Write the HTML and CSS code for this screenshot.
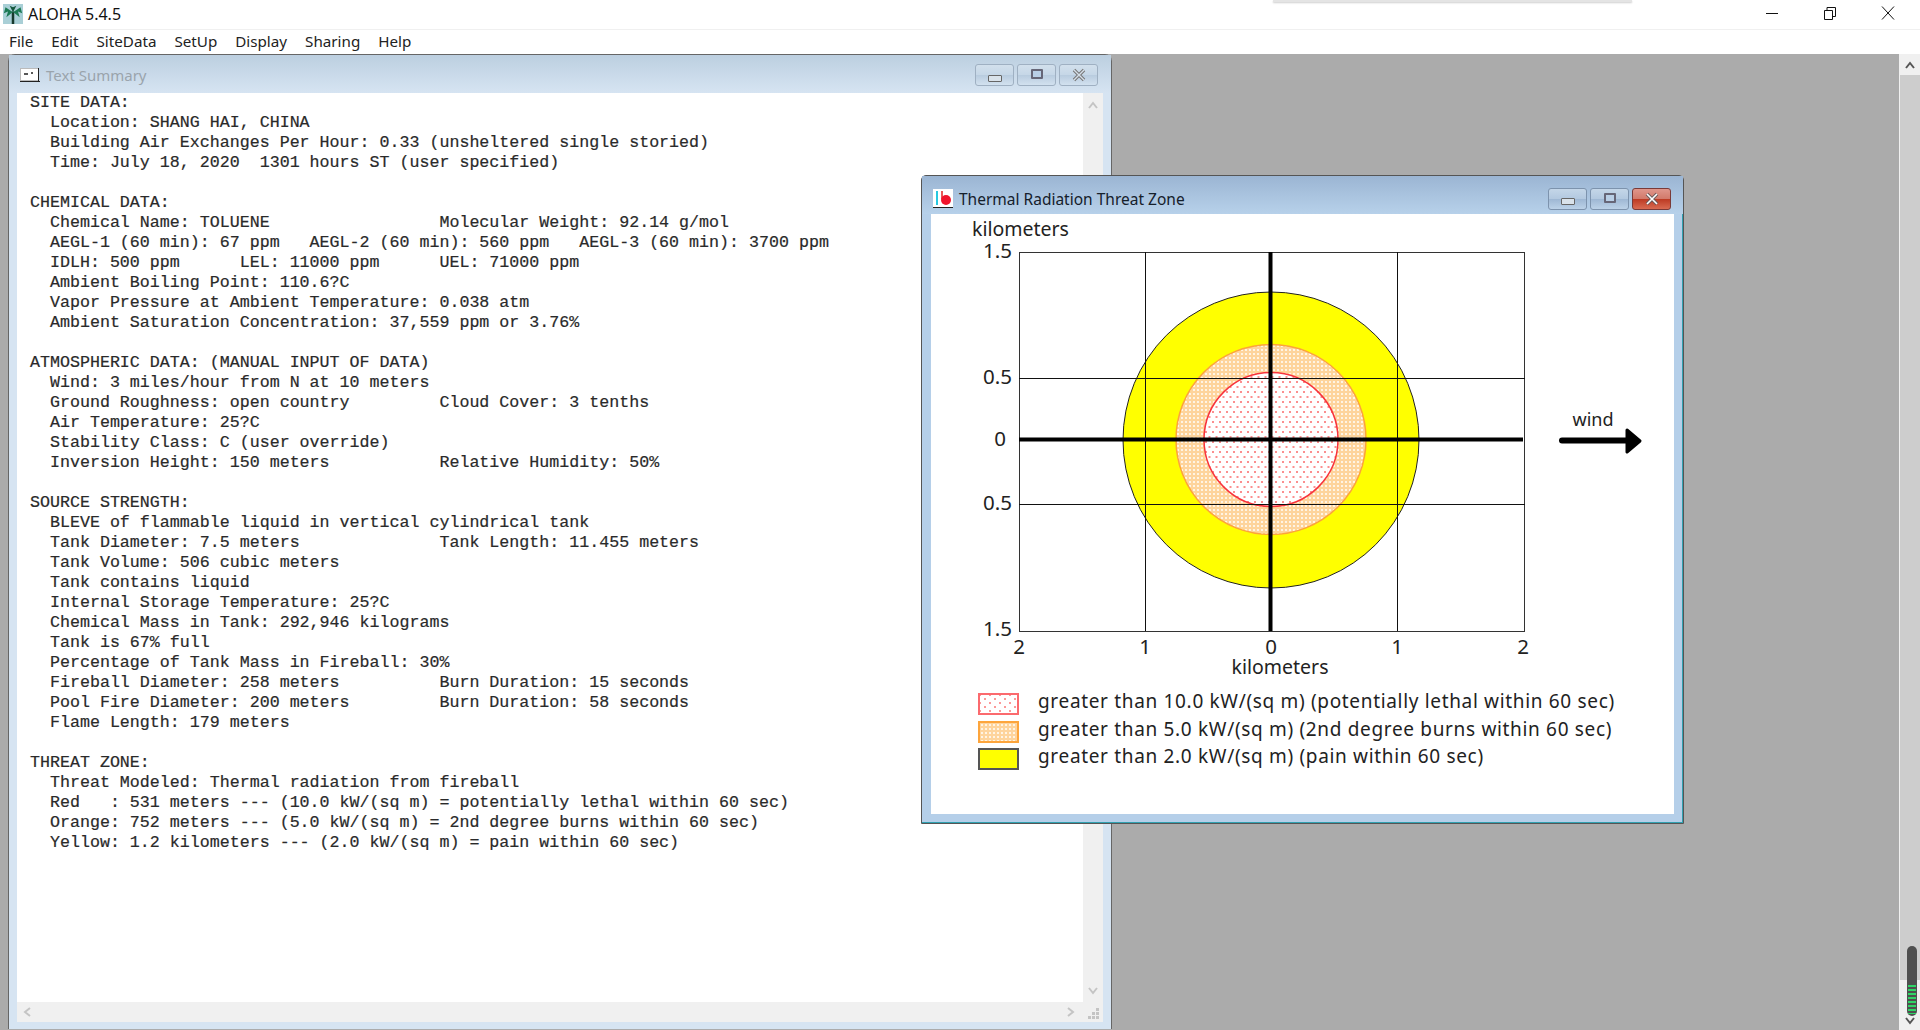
FILE: index.html
```html
<!DOCTYPE html>
<html lang="en">
<head>
    <meta charset="UTF-8">
    <title>ALOHA 5.4.5</title>
    <link rel="stylesheet" href="styles.css">
</head>
<body>
    <div class="app-title">
        <svg class="app-icon" width="20" height="20" viewBox="0 0 24 24">
            <rect width="24" height="24" fill="#a9cfd6"/>
            <rect x="10.5" y="9" width="3" height="15" fill="#17392c"/>
            <path d="M12 10 L3 4 L1 11 L6 9 L4 16 L10 11 Z" fill="#1c7a54"/>
            <path d="M12 10 L21 4 L23 11 L18 9 L20 16 L14 11 Z" fill="#1c7a54"/>
            <path d="M12 10 L8 2 L12 4 L16 2 Z" fill="#14573c"/>
        </svg>
        <span class="app-name">ALOHA 5.4.5</span>
        <div class="app-shadow"></div>
        <div class="win-controls">
            <svg width="14" height="14" viewBox="0 0 14 14"><path d="M1 7.5H13" stroke="#111" fill="none"/></svg>
            <svg width="14" height="14" viewBox="0 0 14 14"><path d="M1.5 4.5H9.5V13.5H1.5Z M4 4.5V1.5H12.5V10.5H9.5" stroke="#111" fill="none"/></svg>
            <svg width="14" height="14" viewBox="0 0 14 14"><path d="M1 0.5L13 13.5M13 0.5L1 13.5" stroke="#111" fill="none"/></svg>
        </div>
    </div>

    <div class="menubar">
        <span>File</span>
        <span>Edit</span>
        <span>SiteData</span>
        <span>SetUp</span>
        <span>Display</span>
        <span>Sharing</span>
        <span>Help</span>
    </div>

    <div class="mdi">
        <!-- Text summary -->
        <div class="doc-window">
            <div class="doc-title">
                <svg class="doc-icon" width="20" height="14" viewBox="0 0 20 14">
                    <rect x="0.5" y="0.5" width="18" height="12" fill="#fff" stroke="#bbb"/>
                    <path d="M0 13.5H20M18.5 0V14" stroke="#222" fill="none"/>
                    <path d="M5 5V7M7 5V7M11 5H13" stroke="#222" stroke-width="1.5" fill="none"/>
                </svg>
                <span class="doc-name">Text Summary</span>
                <div class="btn-group btn-faded">
                    <div class="cap-btn"><i class="glyph-min"></i></div>
                    <div class="cap-btn"><i class="glyph-max"></i></div>
                    <div class="cap-btn cap-x-faded">
                        <svg width="16" height="14" viewBox="0 0 16 14"><path d="M3 2L13 12M13 2L3 12" stroke="#777" stroke-width="3.5" fill="none"/><path d="M3 2L13 12M13 2L3 12" stroke="#d5dfe9" stroke-width="1.4" fill="none"/></svg>
                    </div>
                </div>
            </div>
            <div class="doc-body">
                <pre class="summary">SITE DATA:
  Location: SHANG HAI, CHINA
  Building Air Exchanges Per Hour: 0.33 (unsheltered single storied)
  Time: July 18, 2020  1301 hours ST (user specified)

CHEMICAL DATA:
  Chemical Name: TOLUENE                 Molecular Weight: 92.14 g/mol
  AEGL-1 (60 min): 67 ppm   AEGL-2 (60 min): 560 ppm   AEGL-3 (60 min): 3700 ppm
  IDLH: 500 ppm      LEL: 11000 ppm      UEL: 71000 ppm
  Ambient Boiling Point: 110.6?C
  Vapor Pressure at Ambient Temperature: 0.038 atm
  Ambient Saturation Concentration: 37,559 ppm or 3.76%

ATMOSPHERIC DATA: (MANUAL INPUT OF DATA)
  Wind: 3 miles/hour from N at 10 meters
  Ground Roughness: open country         Cloud Cover: 3 tenths
  Air Temperature: 25?C
  Stability Class: C (user override)
  Inversion Height: 150 meters           Relative Humidity: 50%

SOURCE STRENGTH:
  BLEVE of flammable liquid in vertical cylindrical tank
  Tank Diameter: 7.5 meters              Tank Length: 11.455 meters
  Tank Volume: 506 cubic meters
  Tank contains liquid
  Internal Storage Temperature: 25?C
  Chemical Mass in Tank: 292,946 kilograms
  Tank is 67% full
  Percentage of Tank Mass in Fireball: 30%
  Fireball Diameter: 258 meters          Burn Duration: 15 seconds
  Pool Fire Diameter: 200 meters         Burn Duration: 58 seconds
  Flame Length: 179 meters

THREAT ZONE:
  Threat Modeled: Thermal radiation from fireball
  Red   : 531 meters --- (10.0 kW/(sq m) = potentially lethal within 60 sec)
  Orange: 752 meters --- (5.0 kW/(sq m) = 2nd degree burns within 60 sec)
  Yellow: 1.2 kilometers --- (2.0 kW/(sq m) = pain within 60 sec)</pre>
                <div class="vscroll">
                    <svg width="12" height="8" viewBox="0 0 12 8"><path d="M2 7L6 2L10 7" stroke="#c4c4c4" stroke-width="2" fill="none"/></svg>
                    <svg width="12" height="8" viewBox="0 0 12 8"><path d="M2 1L6 6L10 1" stroke="#c4c4c4" stroke-width="2" fill="none"/></svg>
                </div>
            </div>
            <div class="hscroll">
                <svg width="8" height="12" viewBox="0 0 8 12"><path d="M7 2L2 6L7 10" stroke="#c4c4c4" stroke-width="2" fill="none"/></svg>
                <svg width="8" height="12" viewBox="0 0 8 12"><path d="M1 2L6 6L1 10" stroke="#c4c4c4" stroke-width="2" fill="none"/></svg>
                <svg class="grip" width="14" height="14" viewBox="0 0 14 14" fill="#c4c4c4">
                    <rect x="9" y="1" width="3" height="3"/><rect x="5" y="5" width="3" height="3"/><rect x="9" y="5" width="3" height="3"/>
                    <rect x="1" y="9" width="3" height="3"/><rect x="5" y="9" width="3" height="3"/><rect x="9" y="9" width="3" height="3"/>
                </svg>
            </div>
        </div>

        <!-- Threat zone plot -->
        <div class="threat-window">
            <div class="threat-title">
                <svg class="threat-icon" width="20" height="20" viewBox="0 0 20 20">
                    <rect width="20" height="18" fill="#fff"/>
                    <path d="M4 2V16" stroke="#27c8e0" stroke-width="2"/>
                    <path d="M9 2V10" stroke="#e02020" stroke-width="1.5"/>
                    <circle cx="13" cy="11" r="5" fill="#f0142c"/>
                    <path d="M0 18.5H20" stroke="#222"/>
                </svg>
                <span class="threat-name">Thermal Radiation Threat Zone</span>
                <div class="btn-group">
                    <div class="cap-btn"><i class="glyph-min"></i></div>
                    <div class="cap-btn"><i class="glyph-max"></i></div>
                    <div class="cap-btn cap-close">
                        <svg width="16" height="14" viewBox="0 0 16 14"><path d="M3 2L13 12M13 2L3 12" stroke="#6b5a5a" stroke-width="3.5" fill="none"/><path d="M3 2L13 12M13 2L3 12" stroke="#fff" stroke-width="1.6" fill="none"/></svg>
                    </div>
                </div>
            </div>
            <div class="threat-body">
                <svg class="plot" width="742" height="479" viewBox="931 214 742 479">
                    <defs>
                        <pattern id="dotsRed" width="7" height="10" patternUnits="userSpaceOnUse">
                            <rect width="7" height="10" fill="#fff"/>
                            <rect x="1" y="1" width="2" height="2" fill="#fb8f8f"/>
                            <rect x="4.5" y="6" width="2" height="2" fill="#fb8f8f"/>
                        </pattern>
                        <pattern id="dotsOrange" width="4" height="4" patternUnits="userSpaceOnUse">
                            <rect width="4" height="4" fill="#fed49c"/>
                            <rect x="1" y="1" width="2" height="2" fill="#fff4e4"/>
                        </pattern>
                    </defs>
                    <text class="plot-label" x="972" y="236">kilometers</text>
                    <rect x="1019.5" y="252.5" width="505" height="379" fill="#fff" stroke="#333"/>
                    <circle cx="1271" cy="440" r="148" fill="#ffff00" stroke="#222"/>
                    <circle cx="1271" cy="439.5" r="95" fill="url(#dotsOrange)" stroke="#fda33a" stroke-width="1.5"/>
                    <circle cx="1271" cy="439.5" r="67" fill="url(#dotsRed)" stroke="#f8333c" stroke-width="1.5"/>
                    <path d="M1145.5 252V631M1397.5 252V631M1019 378.5H1525M1019 504.5H1525" stroke="#111" fill="none"/>
                    <path d="M1270.5 252V631M1019 439.5H1523" stroke="#000" stroke-width="4" fill="none"/>
                    <text class="tick-label tick-y" x="1012" y="258">1.5</text>
                    <text class="tick-label tick-y" x="1012" y="384">0.5</text>
                    <text class="tick-label tick-y" x="1006" y="446">0</text>
                    <text class="tick-label tick-y" x="1012" y="510">0.5</text>
                    <text class="tick-label tick-y" x="1012" y="636">1.5</text>
                    <text class="tick-label tick-x" x="1019" y="654">2</text>
                    <text class="tick-label tick-x" x="1145" y="654">1</text>
                    <text class="tick-label tick-x" x="1271" y="654">0</text>
                    <text class="tick-label tick-x" x="1397" y="654">1</text>
                    <text class="tick-label tick-x" x="1523" y="654">2</text>
                    <text class="plot-label tick-x" x="1280" y="674">kilometers</text>
                    <text class="wind-label tick-x" x="1593" y="426">wind</text>
                    <path d="M1562 440.5H1630" stroke="#000" stroke-width="6" stroke-linecap="round"/>
                    <path d="M1627 430L1640 441L1627 452Z" fill="#000" stroke="#000" stroke-width="3" stroke-linejoin="round"/>
                </svg>
                <div class="legend">
                    <div class="legend-row">
                        <span class="swatch swatch-red"></span>
                        <span class="legend-text">greater than 10.0 kW/(sq m) (potentially lethal within 60 sec)</span>
                    </div>
                    <div class="legend-row">
                        <span class="swatch swatch-orange"></span>
                        <span class="legend-text">greater than 5.0 kW/(sq m) (2nd degree burns within 60 sec)</span>
                    </div>
                    <div class="legend-row">
                        <span class="swatch swatch-yellow"></span>
                        <span class="legend-text">greater than 2.0 kW/(sq m) (pain within 60 sec)</span>
                    </div>
                </div>
            </div>
        </div>

        <!-- Outer scrollbar -->
        <div class="mdi-scroll">
            <div class="mdi-scroll-up">
                <svg width="12" height="8" viewBox="0 0 12 8"><path d="M2 7L6 2L10 7" stroke="#555" stroke-width="2" fill="none"/></svg>
            </div>
            <div class="mdi-scroll-track"></div>
            <div class="mdi-scroll-down">
                <svg width="12" height="8" viewBox="0 0 12 8"><path d="M2 1L6 6L10 1" stroke="#555" stroke-width="2" fill="none"/></svg>
            </div>
        </div>
        <div class="meter"><div class="meter-bars"></div></div>
    </div>
</body>
</html>
```

FILE: styles.css
```css
html, body {
    height: 100%;
}
body {
    margin: 0;
    display: flex;
    flex-direction: column;
    height: 1030px;
    overflow: hidden;
    background: #fff;
    font-family: "Noto Sans", "Liberation Sans", sans-serif;
    color: #111;
}
.app-title {
    position: relative;
    height: 29px;
    display: flex;
    align-items: center;
    padding: 0 0 2px 3px;
    box-sizing: border-box;
    height: 30px;
    border-bottom: 1px solid #f0f0f0;
}
.app-icon {
    margin-right: 5px;
}
.app-name {
    font-size: 16px;
}
.app-shadow {
    position: absolute;
    left: 1273px;
    top: 0;
    width: 359px;
    height: 2px;
    background: #e4e4e4;
    box-shadow: 0 1px 2px rgba(0, 0, 0, 0.2);
}
.win-controls {
    margin-left: auto;
    display: flex;
    gap: 44px;
    padding-right: 25px;
    padding-bottom: 2px;
}
.menubar {
    height: 24px;
    box-sizing: border-box;
    display: flex;
    align-items: center;
    padding: 0 0 3px 9px;
    gap: 18px;
    font-size: 15.2px;
    color: #222;
    box-shadow: 0 1px 1px #ddd;
}
.mdi {
    position: relative;
    flex: 1;
    display: flex;
    background: #ababab;
    overflow: hidden;
}

/* text window */
.doc-window {
    width: 1104px;
    margin-left: 8px;
    display: flex;
    flex-direction: column;
    background: #d6e4f2;
    border: 1px solid #666;
    border-bottom: none;
    border-radius: 7px 7px 0 0;
    height: 975px;
    padding: 0 8px 7px 8px;
    box-sizing: border-box;
}
.doc-title {
    height: 38px;
    box-sizing: border-box;
    flex: none;
    display: flex;
    align-items: center;
    margin: 0 -8px;
    padding: 2px 13px 0 11px;
    background: linear-gradient(#bccfe0, #d6e4f2);
    font-size: 15px;
}
.doc-icon {
    margin-right: 6px;
}
.doc-name {
    color: #9aa4ac;
}
.doc-body {
    flex: 1;
    display: flex;
    background: #fff;
    min-height: 0;
}
.summary {
    flex: 1;
    margin: 0;
    padding-left: 13px;
    font-family: "Liberation Mono", monospace;
    font-size: 16.65px;
    line-height: 20px;
    color: #2a2a2a;
    -webkit-text-stroke: 0.2px #2a2a2a;
}
.vscroll {
    width: 20px;
    background: #f0f0f0;
    display: flex;
    flex-direction: column;
    justify-content: space-between;
    align-items: center;
    padding: 8px 0 7px;
}
.hscroll {
    height: 20px;
    flex: none;
    background: #f0f0f0;
    display: flex;
    align-items: center;
    padding: 0 2px 0 6px;
    justify-content: space-between;
}
.hscroll svg:nth-child(2) {
    margin-left: auto;
    margin-right: 12px;
}
.hscroll .grip {
    margin-top: 4px;
}

/* caption buttons */
.btn-group {
    margin-left: auto;
    display: flex;
    gap: 3px;
}
.cap-btn {
    width: 39px;
    height: 22px;
    box-sizing: border-box;
    border: 1px solid #7d93ad;
    border-radius: 3px;
    background: linear-gradient(#c4d6e8 0%, #b3c9e0 48%, #9fb8d4 52%, #bcd2e8 100%);
    display: flex;
    align-items: center;
    justify-content: center;
}
.btn-faded .cap-btn {
    border-color: #9fb0c2;
    background: linear-gradient(#d2e0ec 0%, #c6d7e7 48%, #b9ccdf 52%, #d2e1ef 100%);
}
.glyph-min {
    display: block;
    width: 12px;
    height: 5px;
    margin-top: 6px;
    background: #d9e2ea;
    border: 1px solid #666;
    border-radius: 1px;
}
.glyph-max {
    display: block;
    width: 8px;
    height: 6px;
    margin-bottom: 2px;
    border: 2px solid #667;
    border-radius: 1px;
    background: #b9cfe6;
}
.cap-close {
    border-color: #7a3a38;
    background: linear-gradient(#e0968b 0%, #d27a6b 48%, #bd3b24 52%, #d96b52 100%);
}

/* threat zone window */
.threat-window {
    position: absolute;
    left: 921px;
    top: 121px;
    width: 763px;
    height: 649px;
    box-sizing: border-box;
    display: flex;
    flex-direction: column;
    background: #b5cfe9;
    border: 1px solid #555;
    border-radius: 5px 5px 0 0;
    padding: 0 9px 9px;
    box-shadow: inset -1px -1px 0 #30a0b0;
}
.threat-title {
    height: 38px;
    box-sizing: border-box;
    flex: none;
    display: flex;
    align-items: center;
    margin: 0 -9px;
    padding: 7px 12px 0 11px;
    background: linear-gradient(#9bb5d3, #b7d1ea);
    font-size: 15.5px;
}
.threat-icon {
    margin-right: 6px;
}
.threat-name {
    color: #15202b;
}
.threat-body {
    flex: 1;
    display: flex;
    flex-direction: column;
    background: #fff;
}
.plot {
    display: block;
    flex: none;
}
.plot-label {
    font-family: "Noto Sans", sans-serif;
    font-size: 19.5px;
    fill: #222;
}
.tick-label {
    font-family: "Noto Sans", sans-serif;
    font-size: 20.5px;
    fill: #222;
}
.wind-label {
    font-family: "Noto Sans", sans-serif;
    font-size: 18px;
    fill: #222;
}
.tick-y {
    text-anchor: end;
}
.tick-x {
    text-anchor: middle;
}
.legend {
    display: flex;
    flex-direction: column;
    gap: 5px;
    padding-left: 47px;
}
.legend-row {
    display: flex;
    align-items: center;
    gap: 19px;
    height: 22.5px;
    font-size: 19px;
    letter-spacing: 0.67px;
    color: #222;
}
.legend-text {
    padding-bottom: 6px;
}
.swatch {
    width: 41px;
    height: 22px;
    box-sizing: border-box;
    border: 2px solid #333;
}
.swatch-red {
    border-color: #fb6a6e;
    background: #fff;
    background-image: radial-gradient(#fb9a9a 1.2px, transparent 1.3px), radial-gradient(#fb9a9a 1.2px, transparent 1.3px);
    background-size: 10px 8px;
    background-position: 0 0, 5px 4px;
}
.swatch-orange {
    border-color: #fda53c;
    background: #fed49c;
    background-image: radial-gradient(#fff4e4 1px, transparent 1.1px);
    background-size: 4px 4px;
}
.swatch-yellow {
    border-color: #555;
    background: #ffff00;
}

/* outer scrollbar */
.mdi-scroll {
    position: absolute;
    top: 0;
    right: 0;
    bottom: 0;
    width: 21px;
    display: flex;
    flex-direction: column;
    background: #f0f0f0;
    border-left: 1px solid #f0f0f0;
    box-sizing: border-box;
}
.mdi-scroll-up,
.mdi-scroll-down {
    height: 21px;
    flex: none;
    display: flex;
    align-items: center;
    justify-content: center;
}
.mdi-scroll-track {
    height: 905px;
    background: #cdcdcd;
}
.mdi-scroll-down {
    margin-top: auto;
    height: 18px;
}
.meter {
    position: absolute;
    left: 1907px;
    top: 892px;
    width: 10px;
    height: 70px;
    border-radius: 5px;
    background: #4f4f4f;
    padding: 39px 1px 2px;
    box-sizing: border-box;
}
.meter-bars {
    height: 100%;
    background: repeating-linear-gradient(#2fd566 0 2px, #4f4f4f 2px 4px);
}
```
